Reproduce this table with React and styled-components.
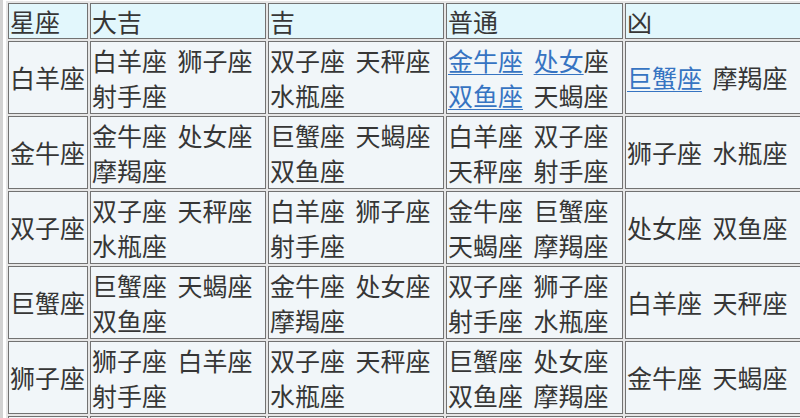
import React from "react";
import styled, { createGlobalStyle } from "styled-components";

const GlobalStyle = createGlobalStyle`
  html, body {
    margin: 0;
    padding: 0;
    overflow: hidden;
    background: #ffffff;
  }
  body {
    font-family: "Noto Sans CJK SC", "Noto Sans", sans-serif;
  }
`;

const Frame = styled.div`
  width: 800px;
  height: 418px;
  box-sizing: border-box;
  border-left: 3px solid #d2d2d2;
  padding: 1px 0 0 3px;
  overflow: hidden;
`;

const Table = styled.table`
  border-collapse: separate;
  border-spacing: 2px;
  table-layout: fixed;
  width: 797px;
  background: #e6e6e6;
  color: #363636;
  font-size: 25px;
  word-spacing: 5px;
`;

const HeadCell = styled.th`
  box-sizing: border-box;
  width: ${(p) => p.$w}px;
  height: 36px;
  padding: 0 1px;
  border: 1px solid #727272;
  background: #e2f7fc;
  font-weight: normal;
  text-align: left;
  vertical-align: middle;
  line-height: 34px;
  white-space: nowrap;
  overflow: hidden;
`;

const Cell = styled.td`
  box-sizing: border-box;
  height: 73px;
  padding: 0 1px;
  border: 1px solid #727272;
  background: #f1f6f9;
  vertical-align: middle;
  line-height: 35px;
  overflow: hidden;
  white-space: ${(p) => (p.$name ? "nowrap" : "normal")};
`;

const Link = styled.a`
  color: #3674c2;
  text-decoration: underline;
  text-underline-offset: 3px;
  text-decoration-thickness: 1px;
`;

const columns = [
  { title: "星座", w: 80 },
  { title: "大吉", w: 176 },
  { title: "吉", w: 176 },
  { title: "普通", w: 177 },
  { title: "凶", w: 176 },
];

const rows = [
  {
    name: "白羊座",
    cells: [
      "白羊座 狮子座 射手座",
      "双子座 天秤座 水瓶座",
      [
        { link: "金牛座" },
        " ",
        { link: "处女" },
        "座 ",
        { link: "双鱼座" },
        " 天蝎座",
      ],
      [{ link: "巨蟹座" }, " 摩羯座"],
    ],
  },
  {
    name: "金牛座",
    cells: [
      "金牛座 处女座 摩羯座",
      "巨蟹座 天蝎座 双鱼座",
      "白羊座 双子座 天秤座 射手座",
      "狮子座 水瓶座",
    ],
  },
  {
    name: "双子座",
    cells: [
      "双子座 天秤座 水瓶座",
      "白羊座 狮子座 射手座",
      "金牛座 巨蟹座 天蝎座 摩羯座",
      "处女座 双鱼座",
    ],
  },
  {
    name: "巨蟹座",
    cells: [
      "巨蟹座 天蝎座 双鱼座",
      "金牛座 处女座 摩羯座",
      "双子座 狮子座 射手座 水瓶座",
      "白羊座 天秤座",
    ],
  },
  {
    name: "狮子座",
    cells: [
      "狮子座 白羊座 射手座",
      "双子座 天秤座 水瓶座",
      "巨蟹座 处女座 双鱼座 摩羯座",
      "金牛座 天蝎座",
    ],
  },
  {
    name: "处女座",
    cells: [
      "处女座 金牛座 摩羯座",
      "巨蟹座 天蝎座 双鱼座",
      "白羊座 双子座 狮子座 天秤座",
      "射手座 水瓶座",
    ],
  },
];

const renderContent = (content) => {
  if (typeof content === "string") return content;
  return content.map((part, i) =>
    typeof part === "string" ? (
      <React.Fragment key={i}>{part}</React.Fragment>
    ) : (
      <Link key={i} href="#">
        {part.link}
      </Link>
    )
  );
};

export default function App() {
  return (
    <>
      <GlobalStyle />
      <Frame>
        <Table>
          <thead>
            <tr>
              {columns.map((c) => (
                <HeadCell key={c.title} $w={c.w}>
                  {c.title}
                </HeadCell>
              ))}
            </tr>
          </thead>
          <tbody>
            {rows.map((row) => (
              <tr key={row.name}>
                <Cell $name>{row.name}</Cell>
                {row.cells.map((content, i) => (
                  <Cell key={i}>{renderContent(content)}</Cell>
                ))}
              </tr>
            ))}
          </tbody>
        </Table>
      </Frame>
    </>
  );
}
